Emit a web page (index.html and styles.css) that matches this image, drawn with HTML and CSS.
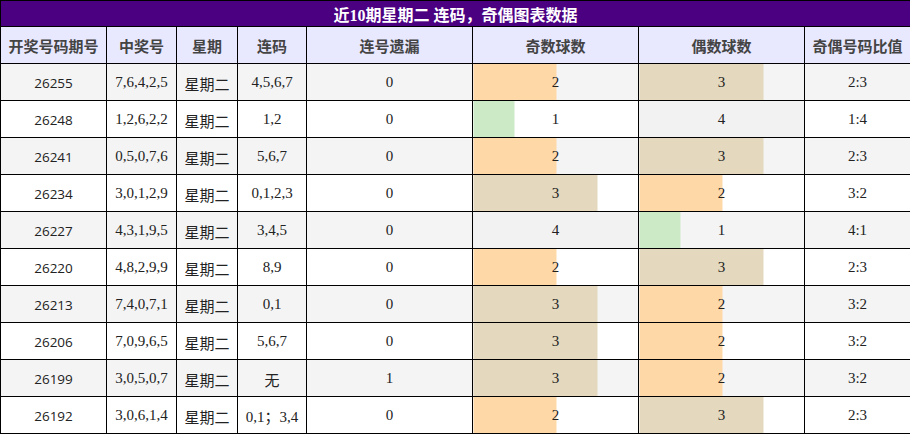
FILE: index.html
```html
<!DOCTYPE html>
<html>
<head>
<meta charset="utf-8">
<link rel="stylesheet" href="styles.css">
</head>
<body>
<table class="tbl">
<colgroup>
<col class="w1"><col class="w2"><col class="w3"><col class="w4"><col class="w5"><col class="w6"><col class="w7"><col class="w8">
</colgroup>
<thead>
<tr class="title"><th colspan="8">近10期星期二 连码，奇偶图表数据</th></tr>
<tr class="head"><th>开奖号码期号</th><th>中奖号</th><th>星期</th><th>连码</th><th>连号遗漏</th><th>奇数球数</th><th>偶数球数</th><th>奇偶号码比值</th></tr>
</thead>
<tbody>
<tr class="odd"><td class="sans">26255</td><td>7,6,4,2,5</td><td class="cn">星期二</td><td>4,5,6,7</td><td>0</td><td class="bar b2" style="--w:50%">2</td><td class="bar b3" style="--w:75%">3</td><td>2:3</td></tr>
<tr><td class="sans">26248</td><td>1,2,6,2,2</td><td class="cn">星期二</td><td>1,2</td><td>0</td><td class="bar b1" style="--w:25%">1</td><td class="bar b4" style="--w:100%">4</td><td>1:4</td></tr>
<tr class="odd"><td class="sans">26241</td><td>0,5,0,7,6</td><td class="cn">星期二</td><td>5,6,7</td><td>0</td><td class="bar b2" style="--w:50%">2</td><td class="bar b3" style="--w:75%">3</td><td>2:3</td></tr>
<tr><td class="sans">26234</td><td>3,0,1,2,9</td><td class="cn">星期二</td><td>0,1,2,3</td><td>0</td><td class="bar b3" style="--w:75%">3</td><td class="bar b2" style="--w:50%">2</td><td>3:2</td></tr>
<tr class="odd"><td class="sans">26227</td><td>4,3,1,9,5</td><td class="cn">星期二</td><td>3,4,5</td><td>0</td><td class="bar b4" style="--w:100%">4</td><td class="bar b1" style="--w:25%">1</td><td>4:1</td></tr>
<tr><td class="sans">26220</td><td>4,8,2,9,9</td><td class="cn">星期二</td><td>8,9</td><td>0</td><td class="bar b2" style="--w:50%">2</td><td class="bar b3" style="--w:75%">3</td><td>2:3</td></tr>
<tr class="odd"><td class="sans">26213</td><td>7,4,0,7,1</td><td class="cn">星期二</td><td>0,1</td><td>0</td><td class="bar b3" style="--w:75%">3</td><td class="bar b2" style="--w:50%">2</td><td>3:2</td></tr>
<tr><td class="sans">26206</td><td>7,0,9,6,5</td><td class="cn">星期二</td><td>5,6,7</td><td>0</td><td class="bar b3" style="--w:75%">3</td><td class="bar b2" style="--w:50%">2</td><td>3:2</td></tr>
<tr class="odd"><td class="sans">26199</td><td>3,0,5,0,7</td><td class="cn">星期二</td><td class="cn">无</td><td>1</td><td class="bar b3" style="--w:75%">3</td><td class="bar b2" style="--w:50%">2</td><td>3:2</td></tr>
<tr><td class="sans">26192</td><td>3,0,6,1,4</td><td class="cn">星期二</td><td>0,1；3,4</td><td>0</td><td class="bar b2" style="--w:50%">2</td><td class="bar b3" style="--w:75%">3</td><td>2:3</td></tr>
</tbody>
</table>
</body>
</html>
```

FILE: styles.css
```css
html, body {
  margin: 0;
  padding: 0;
  background: #fff;
}
.tbl {
  width: 910px;
  border-collapse: collapse;
  table-layout: fixed;
  font-family: "Liberation Serif", "Noto Sans CJK SC", serif;
  font-size: 15px;
  color: #222;
}
.w1 { width: 106px; }
.w2 { width: 70px; }
.w3 { width: 61px; }
.w4 { width: 69px; }
.w5 { width: 166px; }
.w6 { width: 166px; }
.w7 { width: 166px; }
.w8 { width: 106px; }
.tbl th, .tbl td {
  border: 1px solid #000;
  padding: 0;
  text-align: center;
  vertical-align: middle;
}
.title th {
  height: 25px;
  background: #4b0082;
  color: #fff;
  font-size: 16px;
  font-weight: bold;
  font-family: "Liberation Serif", "Noto Sans CJK SC", serif;
}
.head th {
  height: 36px;
  background: #e8e8ff;
  color: #444;
  font-size: 15px;
  font-weight: bold;
  font-family: "Noto Sans CJK SC", sans-serif;
}
.tbl td {
  height: 35px;
  padding-top: 1px;
}
.odd td {
  background-color: #f4f4f4;
}
.sans {
  font-family: "Open Sans", "Noto Sans CJK SC", sans-serif;
  font-size: 13.5px;
  color: #222;
}
.tbl td.cn {
  font-family: "Noto Sans CJK SC", sans-serif;
  font-size: 15px;
  color: #222;
  height: 34px;
  padding-top: 2px;
}
.b1 { --c: #cdeac7; }
.b2 { --c: #ffd8a8; }
.b3 { --c: #e4d8be; }
.b4 { --c: #f2f2f2; }
.tbl td.bar {
  background-image: linear-gradient(to right, var(--c) var(--w), transparent var(--w));
}
```
